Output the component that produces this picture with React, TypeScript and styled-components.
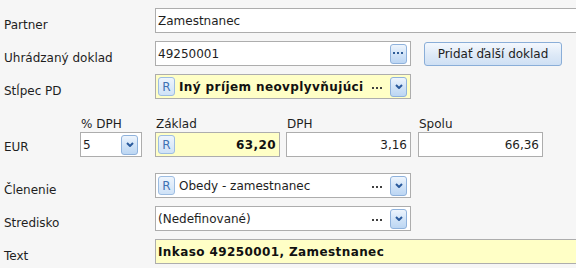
import styled, { createGlobalStyle } from "styled-components";

const GlobalStyle = createGlobalStyle`
  html, body {
    margin: 0;
    padding: 0;
    background: #f6f6f6;
    overflow: hidden;
  }
  body {
    font-family: "DejaVu Sans", Verdana, sans-serif;
    font-size: 12px;
    color: #1e1e1e;
  }
`;

export default function App() {
  return (
    <>
      <GlobalStyle />
      <Form>
        <Row>
          <Label>Partner</Label>
          <Field $grow>
            <FieldText>Zamestnanec</FieldText>
          </Field>
        </Row>
        <Row>
          <Label>Uhrádzaný doklad</Label>
          <Field $width={256}>
            <FieldText>49250001</FieldText>
            <BlueButton>
              <EllipsisIcon />
            </BlueButton>
          </Field>
          <ActionButton>Pridať ďalší doklad</ActionButton>
        </Row>
        <Row>
          <Label>Stĺpec PD</Label>
          <Field $width={256} $yellow>
            <RBadge>R</RBadge>
            <FieldText $bold>Iný príjem neovplyvňujúci</FieldText>
            <Dots />
            <BlueButton>
              <ChevronIcon />
            </BlueButton>
          </Field>
        </Row>
        <AmountRow>
          <Label $width={76}>EUR</Label>
          <Cell $width={62} $gap={13}>
            <CellTitle>% DPH</CellTitle>
            <Field>
              <FieldText>5</FieldText>
              <BlueButton>
                <ChevronIcon />
              </BlueButton>
            </Field>
          </Cell>
          <Cell $width={125} $gap={6}>
            <CellTitle>Základ</CellTitle>
            <Field $yellow>
              <RBadge>R</RBadge>
              <FieldText $bold $right>
                63,20
              </FieldText>
            </Field>
          </Cell>
          <Cell $width={125} $gap={7}>
            <CellTitle>DPH</CellTitle>
            <Field>
              <FieldText $right>3,16</FieldText>
            </Field>
          </Cell>
          <Cell $width={125}>
            <CellTitle>Spolu</CellTitle>
            <Field>
              <FieldText $right>66,36</FieldText>
            </Field>
          </Cell>
        </AmountRow>
        <Row>
          <Label>Členenie</Label>
          <Field $width={256}>
            <RBadge>R</RBadge>
            <FieldText>Obedy - zamestnanec</FieldText>
            <Dots />
            <BlueButton>
              <ChevronIcon />
            </BlueButton>
          </Field>
        </Row>
        <Row>
          <Label>Stredisko</Label>
          <Field $width={256}>
            <FieldText>(Nedefinované)</FieldText>
            <Dots />
            <BlueButton>
              <ChevronIcon />
            </BlueButton>
          </Field>
        </Row>
        <Row>
          <Label>Text</Label>
          <Field $grow $yellow>
            <FieldText $bold>Inkaso 49250001, Zamestnanec</FieldText>
          </Field>
        </Row>
      </Form>
    </>
  );
}

const EllipsisIcon = () => (
  <svg width="11" height="3" viewBox="0 0 11 3">
    <rect x="0" y="0" width="2" height="2" fill="#2f5d98" />
    <rect x="4" y="0" width="2" height="2" fill="#2f5d98" />
    <rect x="8" y="0" width="2" height="2" fill="#2f5d98" />
  </svg>
);

const ChevronIcon = () => (
  <svg width="8" height="5" viewBox="0 0 8 5">
    <path d="M1 1 L4 4 L7 1" stroke="#2a5a9c" strokeWidth="2" fill="none" />
  </svg>
);

const Dots = () => (
  <DotsBox>
    <svg width="11" height="2" viewBox="0 0 11 2">
      <rect x="0" y="0" width="2" height="2" fill="#404040" />
      <rect x="4" y="0" width="2" height="2" fill="#404040" />
      <rect x="8" y="0" width="2" height="2" fill="#404040" />
    </svg>
  </DotsBox>
);

const Form = styled.div`
  display: flex;
  flex-direction: column;
  gap: 8px;
  padding: 8px 0 0 4px;
`;

const Row = styled.div`
  display: flex;
  align-items: center;
  height: 25px;
`;

const AmountRow = styled.div`
  display: flex;
  align-items: flex-end;
  margin: 10px 0 8px;
`;

const Label = styled.div<{ $width?: number }>`
  flex: none;
  width: ${(p) => p.$width ?? 151}px;
  padding-top: 9px;
  white-space: nowrap;
  align-self: ${(p) => (p.$width ? "flex-end" : "auto")};
  line-height: ${(p) => (p.$width ? "12px" : "normal")};
  height: ${(p) => (p.$width ? "16px" : "auto")};
`;

const Field = styled.div<{ $width?: number; $grow?: boolean; $yellow?: boolean }>`
  box-sizing: border-box;
  height: 25px;
  display: flex;
  align-items: center;
  gap: 4px;
  padding: 0 3px 0 2px;
  border: 1px solid #adadad;
  background: ${(p) => (p.$yellow ? "#ffffc6" : "#ffffff")};
  flex: ${(p) => (p.$grow ? "1" : "none")};
  width: ${(p) => (p.$width ? `${p.$width}px` : "auto")};
  margin-right: ${(p) => (p.$grow ? "-6px" : "0")};
`;

const FieldText = styled.div<{ $bold?: boolean; $right?: boolean }>`
  flex: 1;
  min-width: 0;
  overflow: hidden;
  white-space: nowrap;
  font-weight: ${(p) => (p.$bold ? 700 : 400)};
  letter-spacing: ${(p) => (p.$bold ? "0.4px" : "0")};
  text-align: ${(p) => (p.$right ? "right" : "left")};
  color: ${(p) => (p.$bold ? "#111" : "#1e1e1e")};
`;

const DotsBox = styled.div`
  flex: none;
  display: flex;
  align-items: center;
  padding: 2px 3px 0 0;
`;

const BlueButton = styled.div`
  flex: none;
  box-sizing: border-box;
  width: 17px;
  height: 20px;
  display: flex;
  align-items: center;
  justify-content: center;
  border: 1px solid #8fb2dc;
  border-radius: 3px;
  background: linear-gradient(#eef5fd, #cfe2f7 55%, #bcd6f3);
`;

const RBadge = styled.div`
  flex: none;
  box-sizing: border-box;
  width: 17px;
  height: 19px;
  display: flex;
  align-items: center;
  justify-content: center;
  border: 1px solid #9dbde2;
  border-radius: 3px;
  background: linear-gradient(#eef5fd, #cfe2f7);
  color: #3f72b3;
  font-size: 12px;
`;

const ActionButton = styled.div`
  box-sizing: border-box;
  margin-left: 13px;
  width: 138px;
  height: 24px;
  display: flex;
  align-items: center;
  justify-content: center;
  border: 1px solid #8aaed8;
  border-radius: 3px;
  background: linear-gradient(#f4f8fd, #dde9f7 55%, #cfe0f4);
  color: #1e1e1e;
`;

const Cell = styled.div<{ $width: number; $gap?: number }>`
  flex: none;
  display: flex;
  flex-direction: column;
  width: ${(p) => p.$width}px;
  margin-right: ${(p) => p.$gap ?? 0}px;
`;

const CellTitle = styled.div`
  height: 15px;
  line-height: 15px;
  padding-left: 1px;
  white-space: nowrap;
`;
